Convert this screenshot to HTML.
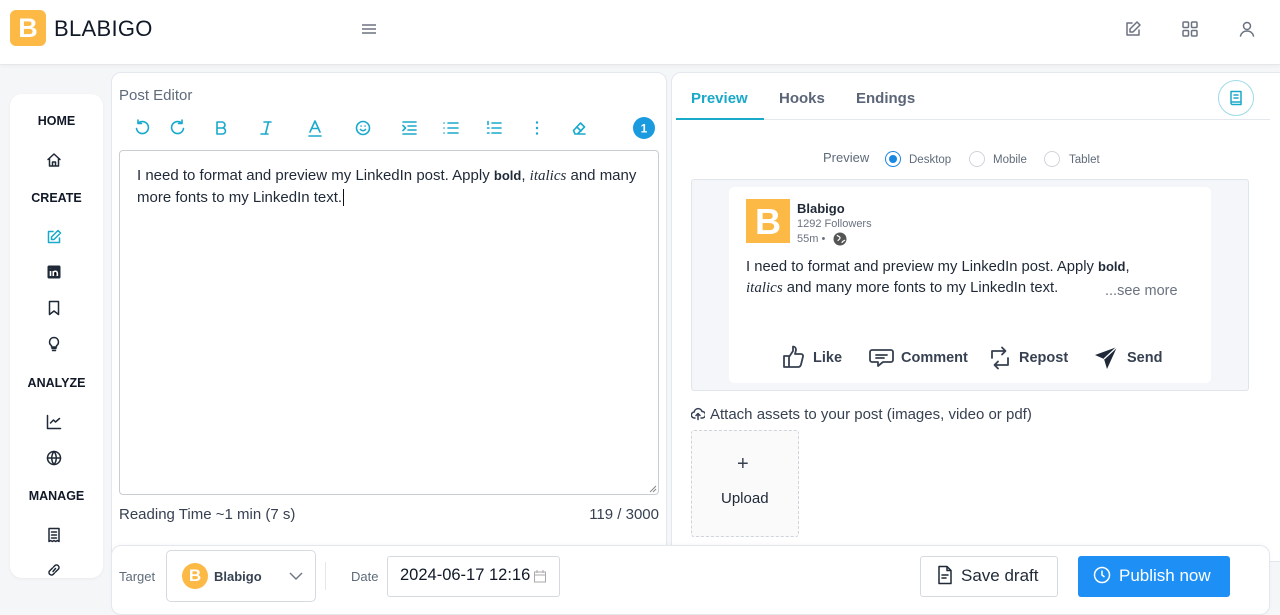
<!DOCTYPE html>
<html><head><meta charset="utf-8"><style>
*{box-sizing:border-box;margin:0;padding:0}
body{width:1280px;height:608px;overflow:hidden;background:#f5f6f8;font-family:"Liberation Sans",sans-serif;position:relative;color:#1f2937}
.a{position:absolute}
.hdr{left:0;top:0;width:1280px;height:65px;background:#fff;border-bottom:1px solid #e5e7eb;box-shadow:0 1px 4px rgba(0,0,0,.04)}
.card{background:#fff;border:1px solid #e3e7ee;border-radius:10px}
.nav{font-weight:bold;font-size:12.5px;color:#111827;width:93px;text-align:center;left:10px}
.ic{stroke:#1f2937;fill:none;stroke-width:1.5;stroke-linecap:round;stroke-linejoin:round}
.tb{stroke:#19a9cc;fill:none;stroke-width:1.6;stroke-linecap:round;stroke-linejoin:round}
.lk{stroke:#374151;fill:none;stroke-width:1.8;stroke-linejoin:round;stroke-linecap:round}
.act{font-weight:bold;font-size:14.5px;color:#374151}
.radio{width:16px;height:16px;border:1px solid #cfd4da;border-radius:50%;background:#fff}
</style></head><body>
<div class="a hdr"></div>
<div class="a" style="left:10px;top:10px;width:36px;height:36px;background:#fdb945;border-radius:6px;color:#fff;font-weight:bold;font-size:27px;text-align:center;line-height:36px">B</div>
<div class="a" style="left:54px;top:16px;font-size:22px;color:#111827;letter-spacing:.3px">BLABIGO</div>
<svg class="a" style="left:360px;top:22px" width="18" height="14"><path d="M2 3h14M2 7h14M2 11h14" stroke="#6b7280" stroke-width="1.5"/></svg>
<svg class="a" style="left:1124px;top:20px" width="18" height="18" viewBox="0 0 18 18"><path class="ic" style="stroke:#6b7280" d="M8 3H3v12h12v-5M13 2l3 3-7 7H6V9z"/></svg>
<svg class="a" style="left:1181px;top:20px" width="18" height="18"><g class="ic" style="stroke:#6b7280"><rect x="2" y="2" width="5.5" height="5.5" rx="1"/><rect x="10.5" y="2" width="5.5" height="5.5" rx="1"/><rect x="2" y="10.5" width="5.5" height="5.5" rx="1"/><rect x="10.5" y="10.5" width="5.5" height="5.5" rx="1"/></g></svg>
<svg class="a" style="left:1238px;top:20px" width="18" height="18"><g class="ic" style="stroke:#6b7280"><circle cx="9" cy="6" r="3.5"/><path d="M2.5 16c1-3.5 3.5-5 6.5-5s5.5 1.5 6.5 5"/></g></svg>

<!-- sidebar -->
<div class="a card" style="left:10px;top:94px;width:93px;height:484px;border-radius:12px;border:none;box-shadow:0 1px 3px rgba(0,0,0,.05)"></div>
<div class="a nav" style="top:114px">HOME</div>
<svg class="a" style="left:46px;top:152px" width="16" height="16"><path class="ic" d="M2 7.5L8 2l6 5.5M3.5 6.5V14h9V6.5M6.5 14v-4h3v4"/></svg>
<div class="a nav" style="top:191px">CREATE</div>
<svg class="a" style="left:46px;top:229px" width="16" height="16"><path class="ic" style="stroke:#19a9cc" d="M7 2.5H2.5v11h11V9M12 1.5l2.5 2.5L8 10.5H5.5V8z"/></svg>
<svg class="a" style="left:46px;top:264px" width="16" height="16"><rect x="1.5" y="1.5" width="13" height="13" rx="1.5" fill="#1f2937"/><path d="M4.5 7v5M4.5 4.6v.2M7.3 12V7m0 2.2c0-2.6 4-2.6 4 0V12" stroke="#fff" stroke-width="1.6"/></svg>
<svg class="a" style="left:46px;top:300px" width="16" height="16"><path class="ic" d="M3.5 1.5h9v13L8 11l-4.5 3.5z"/></svg>
<svg class="a" style="left:46px;top:336px" width="16" height="16"><path class="ic" d="M6 12.5h4M6.5 14.5h3M8 1.5a4.5 4.5 0 0 0-2.5 8.2V11h5V9.7A4.5 4.5 0 0 0 8 1.5"/></svg>
<div class="a nav" style="top:376px">ANALYZE</div>
<svg class="a" style="left:46px;top:414px" width="16" height="16"><path class="ic" d="M1.5 1.5v13h13M4.5 9l3-3 2 2 4-3.5"/></svg>
<svg class="a" style="left:46px;top:450px" width="16" height="16"><g class="ic"><circle cx="8" cy="8" r="6.5"/><path d="M1.5 8h13M8 1.5c-3 3.5-3 9.5 0 13M8 1.5c3 3.5 3 9.5 0 13"/></g></svg>
<div class="a nav" style="top:489px">MANAGE</div>
<svg class="a" style="left:46px;top:527px" width="16" height="16"><path class="ic" d="M3 1.5h10v13l-1.7-1-1.6 1-1.7-1-1.6 1-1.7-1-1.7 1zM5.5 5h5M5.5 8h5M5.5 11h5"/></svg>
<svg class="a" style="left:46px;top:562px" width="16" height="16"><path class="ic" d="M7 9.5l2.5-3M6.5 6l-3 3a2.5 2.5 0 0 0 3.5 3.5l1.5-1.5M9.5 10l3-3A2.5 2.5 0 0 0 9 3.5L7.5 5"/></svg>

<!-- editor -->
<div class="a card" style="left:111px;top:72px;width:556px;height:490px"></div>
<div class="a" style="left:119px;top:87px;font-size:15px;color:#5f6b7a">Post Editor</div>
<svg class="a" style="left:132px;top:117px" width="530" height="24">
<g class="tb" transform="translate(0,1)">
<path d="M6 5.5a6 6 0 1 1-1.5 5M6 2v3.5h3.5"/>
<path d="M46 5.5a6 6 0 1 0 1.5 5M46 2v3.5h-3.5" transform="translate(4,0)"/>
<path d="M85 4h5a3 3 0 0 1 0 6h-5zM85 10h5.5a3 3 0 0 1 0 6H85zM85 4v12"/>
<path d="M132 4h7M129 16h7M136.5 4l-3 12"/>
<path d="M178 14l5-11 5 11M179.5 10.5h7M177 18h12"/>
<circle cx="231" cy="10" r="6.5"/><path d="M228.5 11.5c1.4 1.6 3.6 1.6 5 0M229 8h.1M233 8h.1"/>
<path d="M271 4h13M276 8h8M276 12h8M271 16h13M271 7.5l2.5 2.5-2.5 2.5"/>
<path d="M316 5h10M316 10h10M316 15h10M312 5h.1M312 10h.1M312 15h.1"/>
<path d="M360 5h9M360 10h9M360 15h9M356 3.5v3M355.5 10h1.5M355.5 15h1.5"/>
<path d="M405 4.5v.1M405 10v.1M405 15.5v.1" stroke-width="2.4"/>
<path d="M445 16h8M441.5 12.5l7-7.5 4 4-7 7h-2.5zM445 9l4 4"/>
</g>
<circle cx="512" cy="11" r="11" fill="#1a9be0"/><text x="512" y="15.5" text-anchor="middle" font-size="12" font-weight="bold" fill="#fff" font-family="Liberation Sans">1</text>
</svg>
<div class="a" style="left:119px;top:150px;width:540px;height:345px;border:1px solid #c9ccd1;border-radius:4px;background:#fff"></div>
<div class="a" style="left:137px;top:165px;width:515px;font-size:15px;line-height:22px;color:#1f2937">I need to format and preview my LinkedIn post. Apply <b style="font-size:13px">bold</b>, <i style="font-family:'Liberation Serif',serif;font-size:15px">italics</i> and many more fonts to my LinkedIn text.<span style="border-left:1px solid #111;margin-left:1px"></span></div>
<svg class="a" style="left:649px;top:485px" width="8" height="8"><path d="M7 1L1 7M7 4L4 7" stroke="#888" stroke-width="1"/></svg>
<div class="a" style="left:119px;top:506px;font-size:15px;color:#374151">Reading Time ~1 min (7 s)</div>
<div class="a" style="left:500px;width:159px;text-align:right;top:506px;font-size:15px;color:#374151">119 / 3000</div>

<!-- right -->
<div class="a card" style="left:671px;top:72px;width:620px;height:490px"></div>
<div class="a" style="left:691px;top:90px;font-size:15px;font-weight:bold;color:#1aa9c9">Preview</div>
<div class="a" style="left:779px;top:90px;font-size:15px;font-weight:bold;color:#5b6577">Hooks</div>
<div class="a" style="left:856px;top:90px;font-size:15px;font-weight:bold;color:#5b6577">Endings</div>
<div class="a" style="left:676px;top:119px;width:594px;height:1px;background:#e3e7ee"></div>
<div class="a" style="left:676px;top:118px;width:88px;height:2px;background:#1aa9c9"></div>
<div class="a" style="left:1218px;top:80px;width:36px;height:36px;border:1px solid #9fdbe7;border-radius:50%"></div>
<svg class="a" style="left:1228px;top:90px" width="16" height="16"><path class="ic" style="stroke:#1aa9c9" d="M3 1.5h10v13H4.5A1.5 1.5 0 0 1 3 13zM3 12h10M6 5h4M6 8h4"/></svg>
<div class="a" style="left:823px;top:150px;font-size:13px;color:#5f6b7a">Preview</div>
<div class="a radio" style="left:885px;top:151px;border-color:#1a87e0"><div style="margin:3px;width:8px;height:8px;border-radius:50%;background:#1a87e0"></div></div>
<div class="a" style="left:909px;top:154px;font-size:11.5px;color:#5f6b7a">Desktop</div>
<div class="a radio" style="left:969px;top:151px"></div>
<div class="a" style="left:993px;top:154px;font-size:11.5px;color:#5f6b7a">Mobile</div>
<div class="a radio" style="left:1044px;top:151px"></div>
<div class="a" style="left:1069px;top:154px;font-size:11.5px;color:#5f6b7a">Tablet</div>

<div class="a" style="left:691px;top:179px;width:558px;height:212px;background:#f4f6f9;border:1px solid #e0e5ec;border-radius:3px"></div>
<div class="a" style="left:729px;top:187px;width:482px;height:196px;background:#fff;border-radius:5px"></div>
<div class="a" style="left:746px;top:199px;width:44px;height:44px;background:#fdb945;color:#fff;font-weight:bold;font-size:36px;text-align:center;line-height:45px">B</div>
<div class="a" style="left:797px;top:201px;font-size:13px;font-weight:bold;color:#1f2937">Blabigo</div>
<div class="a" style="left:797px;top:218px;font-size:11px;color:#6b7280">1292 Followers</div>
<div class="a" style="left:797px;top:233px;font-size:11px;color:#6b7280">55m •</div>
<svg class="a" style="left:833px;top:232px" width="14" height="14"><circle cx="7" cy="7" r="6.5" fill="#555"/><path d="M4 3c1 2 3 1 3 3s-2 1-2 3M9 11c0-2 2-2 3-3" stroke="#fff" stroke-width="1.2" fill="none"/></svg>
<div class="a" style="left:746px;top:256px;width:430px;font-size:14.8px;line-height:21px;color:#1f2937">I need to format and preview my LinkedIn post. Apply <b style="font-size:13px">bold</b>,<br><i style="font-family:'Liberation Serif',serif;font-size:15px">italics</i> and many more fonts to my LinkedIn text.</div>
<div class="a" style="left:1105px;top:283px;font-size:14.5px;color:#6b7280">...see more</div>
<svg class="a" style="left:782px;top:344px" width="24" height="26"><path class="lk" d="M2 12h5v11H2zM7 13l4-6V2.5c2 0 3 1.5 3 3.5l-1 4h6c1.5 0 2.3 1.3 2 2.5l-2 8c-.3 1.3-1.3 2.5-3 2.5H7"/></svg>
<div class="a act" style="left:813px;top:350px">Like</div>
<svg class="a" style="left:869px;top:347px" width="26" height="22"><path class="lk" d="M3 3h19a2 2 0 0 1 2 2v8a2 2 0 0 1-2 2h-8l-5 4v-4H3a2 2 0 0 1-2-2V5a2 2 0 0 1 2-2zM7 8h11M7 11h8"/></svg>
<div class="a act" style="left:901px;top:350px">Comment</div>
<svg class="a" style="left:988px;top:344px" width="24" height="28"><path class="lk" d="M4 14V7h13M14 3.5L17.5 7 14 10.5M20 14v7H7M10 17.5L6.5 21l3.5 3.5"/></svg>
<div class="a act" style="left:1019px;top:350px">Repost</div>
<svg class="a" style="left:1094px;top:346px" width="24" height="24"><path d="M23 1L1 9l9 4 3 10z" fill="#1f2937"/><path d="M23 1L10 13" stroke="#fff" stroke-width="1.3"/></svg>
<div class="a act" style="left:1127px;top:350px">Send</div>

<svg class="a" style="left:691px;top:407px" width="14" height="14"><path class="ic" style="stroke:#374151" d="M4 11H3.5a3 3 0 0 1-.3-6A4 4 0 0 1 11 4.5a3 3 0 0 1 .5 6.5H10M7 12.5V6.5M5 8.5l2-2 2 2"/></svg>
<div class="a" style="left:710px;top:406px;font-size:15px;color:#374151">Attach assets to your post (images, video or pdf)</div>
<div class="a" style="left:691px;top:430px;width:108px;height:107px;border:1px dashed #cfd4da;border-radius:3px;background:#fafafa"></div>
<div class="a" style="left:737px;top:453px;font-size:20px;color:#374151">+</div>
<div class="a" style="left:721px;top:490px;font-size:15px;color:#1f2937">Upload</div>

<!-- bottom bar -->
<div class="a" style="left:111px;top:545px;width:1159px;height:70px;background:#fff;border:1px solid #e3e7ee;border-radius:10px;box-shadow:0 -1px 4px rgba(0,0,0,.03)"></div>
<div class="a" style="left:119px;top:569px;font-size:13px;color:#5f6b7a">Target</div>
<div class="a" style="left:166px;top:550px;width:150px;height:52px;border:1px solid #d5dae1;border-radius:5px"></div>
<div class="a" style="left:182px;top:563px;width:26px;height:26px;border-radius:50%;background:#fdb945;color:#fff;font-weight:bold;font-size:17px;text-align:center;line-height:26px">B</div>
<div class="a" style="left:214px;top:569px;font-size:13px;font-weight:bold;color:#374151">Blabigo</div>
<svg class="a" style="left:289px;top:571px" width="14" height="10"><path d="M1 2l6 6 6-6" stroke="#6b7280" stroke-width="1.4" fill="none"/></svg>
<div class="a" style="left:325px;top:562px;width:1px;height:28px;background:#e5e7eb"></div>
<div class="a" style="left:351px;top:569px;font-size:13px;color:#5f6b7a">Date</div>
<div class="a" style="left:387px;top:556px;width:173px;height:41px;border:1px solid #d5dae1;border-radius:3px;overflow:hidden"></div>
<div class="a" style="left:400px;top:566px;width:131px;overflow:hidden;white-space:nowrap;font-size:16.5px;color:#111827">2024-06-17 12:16</div>
<svg class="a" style="left:533px;top:569px" width="14" height="14"><path d="M1.5 3h11v10h-11zM1.5 6h11M4 1v3M10 1v3" stroke="#aaa" fill="none"/></svg>
<div class="a" style="left:920px;top:556px;width:138px;height:41px;border:1px solid #d5dae1;border-radius:3px;background:#fff"></div>
<svg class="a" style="left:937px;top:565px" width="16" height="20"><path class="ic" d="M2 1.5h8l4 4v13H2zM10 1.5v4h4M5 10h6M5 13h4"/></svg>
<div class="a" style="left:961px;top:566px;font-size:17px;color:#1f2937">Save draft</div>
<div class="a" style="left:1078px;top:556px;width:152px;height:41px;background:#1e90f5;border-radius:3px"></div>
<svg class="a" style="left:1093px;top:566px" width="18" height="18"><circle cx="9" cy="9" r="7.5" stroke="#fff" stroke-width="1.5" fill="none"/><path d="M9 4.5V9l2.5 2" stroke="#fff" stroke-width="1.5" fill="none"/></svg>
<div class="a" style="left:1119px;top:566px;font-size:17px;color:#fff">Publish now</div>
</body></html>
